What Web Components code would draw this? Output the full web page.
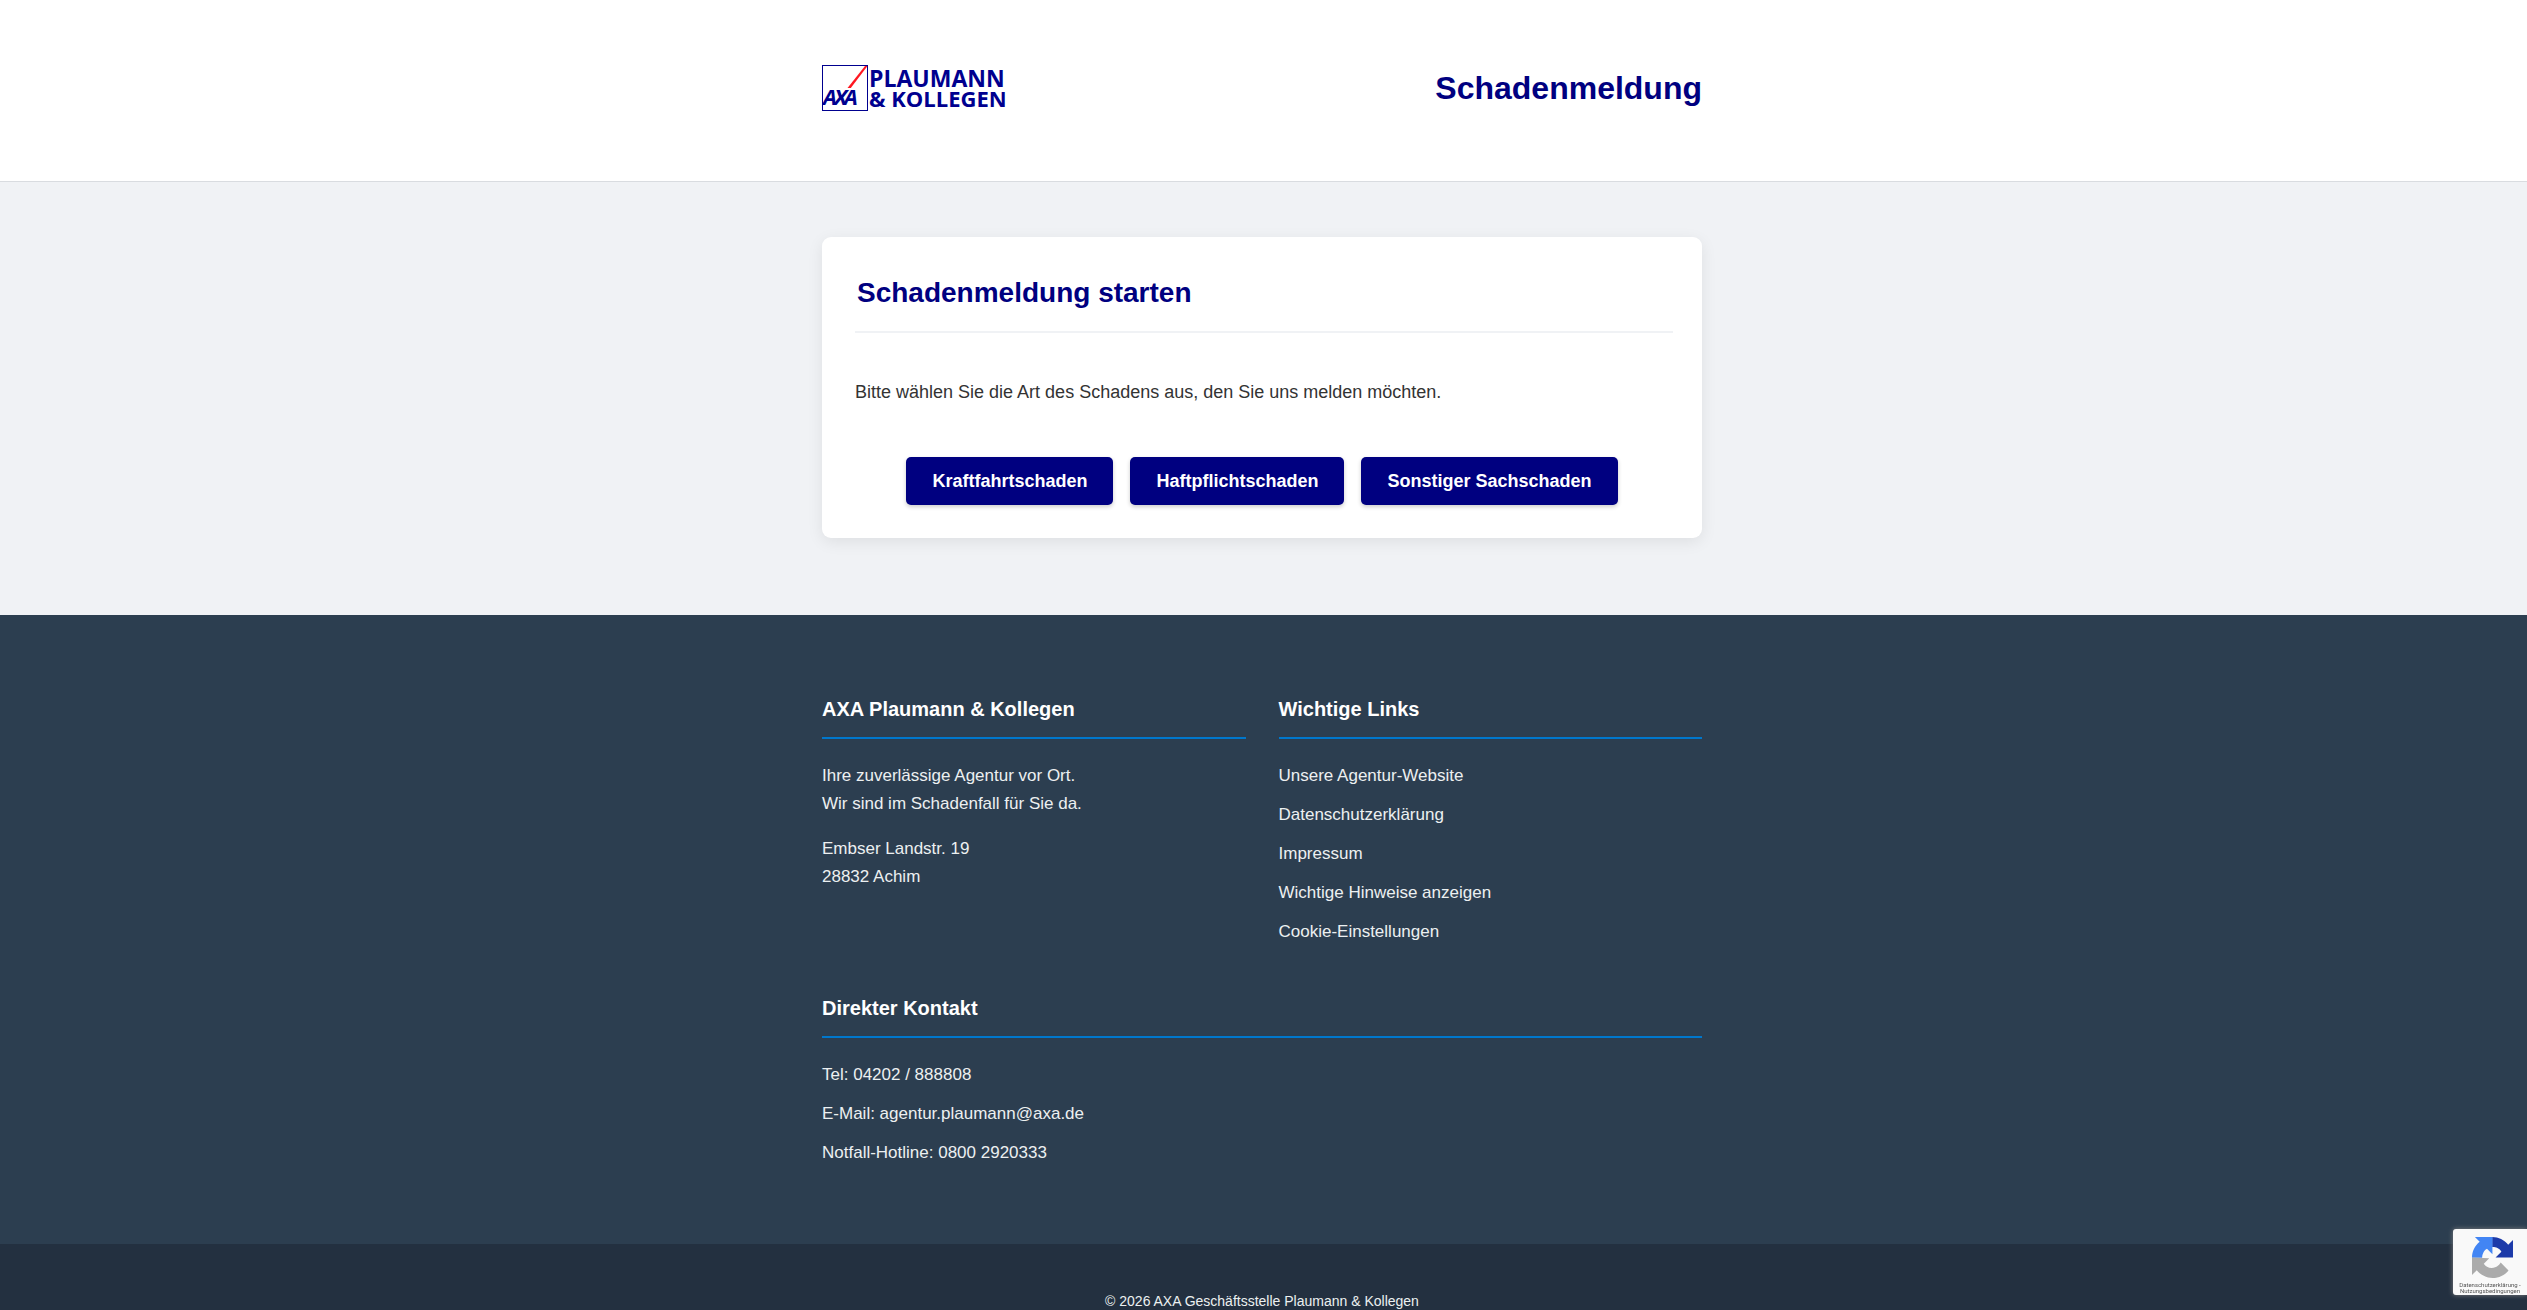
<!DOCTYPE html>
<html lang="de">
<head>
<meta charset="utf-8">
<title>Schadenmeldung</title>
<style>
html { scrollbar-width: none; }
body {
  margin: 0;
  background: #f0f2f5;
  color: #333;
  font-family: Arial, "Liberation Sans", sans-serif;
  font-size: 18px;
  line-height: 28px;
  --navy: #000080;
  --content: 880px;
}
</style>
</head>
<body>
<page-header heading="Schadenmeldung"></page-header>

<main>
  <claim-card heading="Schadenmeldung starten">
    Bitte wählen Sie die Art des Schadens aus, den Sie uns melden möchten.
    <claim-button slot="actions">Kraftfahrtschaden</claim-button>
    <claim-button slot="actions">Haftpflichtschaden</claim-button>
    <claim-button slot="actions">Sonstiger Sachschaden</claim-button>
  </claim-card>
</main>

<page-footer>
  <footer-section heading="AXA Plaumann &amp; Kollegen">
    <p>Ihre zuverlässige Agentur vor Ort.<br>Wir sind im Schadenfall für Sie da.</p>
    <p>Embser Landstr. 19<br>28832 Achim</p>
  </footer-section>
  <footer-section heading="Wichtige Links">
    <a href="#website">Unsere Agentur-Website</a>
    <a href="#datenschutz">Datenschutzerklärung</a>
    <a href="#impressum">Impressum</a>
    <a href="#hinweise">Wichtige Hinweise anzeigen</a>
    <a href="#cookies">Cookie-Einstellungen</a>
  </footer-section>
  <footer-section heading="Direkter Kontakt" wide>
    <a href="tel:04202888808">Tel: 04202 / 888808</a>
    <a href="mailto:agentur.plaumann@axa.de">E-Mail: agentur.plaumann@axa.de</a>
    <a href="tel:08002920333">Notfall-Hotline: 0800 2920333</a>
  </footer-section>
  <span slot="copyright">© 2026 AXA Geschäftsstelle Plaumann &amp; Kollegen</span>
</page-footer>

<captcha-badge></captcha-badge>

<script>
"use strict";

function attach(el, html) {
  const template = document.createElement("template");
  template.innerHTML = html;
  el.attachShadow({ mode: "open" });
  el.shadowRoot.appendChild(template.content.cloneNode(true));
}

class AgencyLogo extends HTMLElement {
  constructor() {
    super();
    attach(this, `
<style>
:host {
  display: flex;
  align-items: center;
  gap: 1px;
  color: #00008f;
  font: bold 23px/20px "Open Sans", "Noto Sans", sans-serif;
}
svg { display: block; }
span { display: block; white-space: nowrap; }
.second { font-size: 22px; }
</style>
<svg width="46" height="46" viewBox="0 0 46 46" role="img" aria-label="AXA">
  <rect x="0.5" y="0.5" width="45" height="45" fill="#fff" stroke="#00008f"/>
  <path d="M25.500 23 43 1h2.500L28.800 23z" fill="#ff1721"/>
  <text y="40" x="1 12 22" font-family="Open Sans" font-style="italic" font-weight="700" font-size="22" fill="#00008f">AXA</text>
</svg>
<div><span>PLAUMANN</span><span class="second">&amp; KOLLEGEN</span></div>
`);
  }
}
customElements.define("agency-logo", AgencyLogo);

class PageHeader extends HTMLElement {
  constructor() {
    super();
    attach(this, `
<style>
:host {
  display: block;
  background: #fff;
  border-bottom: 1px solid #d9dce0;
  padding: 65px 3px 70px 0;
}
header {
  max-width: var(--content);
  margin: 0 auto;
  display: flex;
  align-items: center;
  justify-content: space-between;
}
h1 {
  margin: 0;
  color: var(--navy);
  font-size: 32px;
  line-height: 46px;
}
</style>
<header>
  <agency-logo></agency-logo>
  <h1></h1>
</header>
`);
  }

  connectedCallback() {
    this.shadowRoot.querySelector("h1").textContent = this.getAttribute("heading");
  }
}
customElements.define("page-header", PageHeader);

class ClaimButton extends HTMLElement {
  constructor() {
    super();
    attach(this, `
<style>
:host { display: block; }
button {
  display: block;
  border: 0;
  border-radius: 5px;
  padding: 10px 26px;
  background: var(--navy);
  color: #fff;
  font: inherit;
  font-weight: bold;
  line-height: 28px;
  cursor: pointer;
  box-shadow: 0 2px 4px rgba(0, 0, 0, 0.2);
}
</style>
<button type="button"><slot></slot></button>
`);
  }
}
customElements.define("claim-button", ClaimButton);

class ClaimCard extends HTMLElement {
  constructor() {
    super();
    attach(this, `
<style>
:host {
  display: block;
  padding: 55px 3px 77px 0;
}
section {
  box-sizing: border-box;
  max-width: var(--content);
  margin: 0 auto;
  padding: 33px;
  background: #fff;
  border-radius: 9px;
  box-shadow: 0 4px 16px rgba(0, 0, 0, 0.08);
}
h2 {
  width: 100%;
  margin: 0 0 45px;
  padding: 0 2px 16px;
  border-bottom: 2px solid #f0f2f5;
  color: var(--navy);
  font-size: 28px;
  line-height: 45px;
}
p { margin: 0 0 51px; }
.actions {
  display: flex;
  flex-wrap: wrap;
  justify-content: center;
  gap: 17px;
}
</style>
<section>
  <h2></h2>
  <p><slot></slot></p>
  <div class="actions"><slot name="actions"></slot></div>
</section>
`);
  }

  connectedCallback() {
    this.shadowRoot.querySelector("h2").textContent = this.getAttribute("heading");
  }
}
customElements.define("claim-card", ClaimCard);

class FooterSection extends HTMLElement {
  constructor() {
    super();
    attach(this, `
<style>
:host { display: block; }
:host([wide]) { grid-column: 1 / -1; }
h3 {
  margin: 0 0 23px;
  padding-bottom: 11px;
  border-bottom: 2px solid #0077cc;
  color: #fff;
  font-size: 20px;
  line-height: 34px;
}
.body {
  display: flex;
  flex-direction: column;
  align-items: flex-start;
  gap: 11px;
}
::slotted(p) { margin: 0 0 6px; }
::slotted(a) { color: inherit; text-decoration: none; }
</style>
<h3></h3>
<div class="body"><slot></slot></div>
`);
  }

  connectedCallback() {
    this.shadowRoot.querySelector("h3").textContent = this.getAttribute("heading");
  }
}
customElements.define("footer-section", FooterSection);

class PageFooter extends HTMLElement {
  constructor() {
    super();
    attach(this, `
<style>
:host {
  display: block;
  background: #2c3e50;
  color: #ecf0f1;
  font-size: 17px;
}
.columns {
  padding: 77px 3px 77px 0;
}
.grid {
  max-width: var(--content);
  margin: 0 auto;
  display: grid;
  grid-template-columns: 1fr 1fr;
  gap: 45px 33px;
}
.legal {
  padding: 43px 3px 43px 0;
  background: #233040;
  text-align: center;
  font-size: 14px;
}
</style>
<footer>
  <div class="columns"><div class="grid"><slot></slot></div></div>
  <div class="legal"><slot name="copyright"></slot></div>
</footer>
`);
  }
}
customElements.define("page-footer", PageFooter);

class CaptchaBadge extends HTMLElement {
  constructor() {
    super();
    attach(this, `
<style>
:host {
  position: fixed;
  right: 0;
  bottom: 15px;
  box-sizing: border-box;
  width: 74px;
  height: 66px;
  padding-top: 8px;
  background: #f9f9f9;
  border-radius: 3px 0 0 3px;
  box-shadow: 0 0 5px gray;
  color: #555;
  font: 6px/6px Roboto, sans-serif;
  text-align: center;
}
svg { display: block; margin: 0 auto 4px 19px; }
a { color: inherit; text-decoration: none; }
</style>
<svg width="41" height="41" viewBox="0 0 64 64" aria-hidden="true">
  <path fill="#1c3aa9" d="M64 31.955a33.300 33.300 0 0 0-.013-.457V4.640l-7.425 7.425C50.485 4.626 41.240 0 31.915 0c-.150 0-.300.001-.450.003v15.750c1.300-.150 5.500-.150 8.200 1.500 2.900 1.300 4.800 3.300 6.200 5.600l-9.100 9.100z"/>
  <path fill="#4285f4" d="M31.862.004h-.457H4.547l7.425 7.425C4.533 13.500 0 22.600 0 31.900l.003.300h15.800c.150-4.200 1.200-7.300 3.100-10.100 1.100-1.600 2.800-2.900 4.500-3.700l8.500 8.500z"/>
  <path fill="#ababab" d="M.004 32.138v27.315l7.425-7.425C13.500 59.467 22.700 64 32.085 64c10.100 0 18.900-4.600 24.900-11.800L44.800 39.900c-1.200 2.200-2.900 4.100-4.900 5.500-2.100 1.700-5.100 3-9.200 3-5.400-.100-9.800-2.700-12.300-6.700l8.500-8.500z"/>
</svg>
<a href="#privacy">Datenschutzerklärung</a> -<br><a href="#terms">Nutzungsbedingungen</a>
`);
  }
}
customElements.define("captcha-badge", CaptchaBadge);
</script>
</body>
</html>
